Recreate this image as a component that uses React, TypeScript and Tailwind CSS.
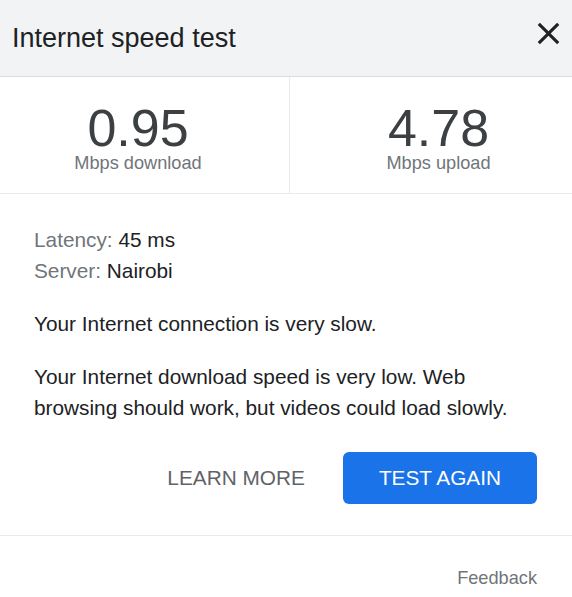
import React from "react";

export default function App() {
  return (
    <div className="w-[572px] h-[597px] bg-white overflow-hidden font-['Liberation_Sans',Arial,sans-serif]">
      {/* Header */}
      <div className="h-[77px] bg-[#f1f3f4] border-b border-[#dadce0] flex items-center justify-between pl-[12px] pr-[5px]">
        <div className="text-[27px] leading-[32px] text-[#202124]">Internet speed test</div>
        <button className="w-[37px] h-[37px] mb-[10px] text-[#202124] flex items-center justify-center" aria-label="Close">
          <svg viewBox="0 0 24 24" width="37" height="37" fill="currentColor">
            <path d="M19 6.41L17.59 5 12 10.59 6.41 5 5 6.41 10.59 12 5 17.59 6.41 19 12 13.41 17.59 19 19 17.59 13.41 12z" />
          </svg>
        </button>
      </div>

      {/* Stats */}
      <div className="h-[117px] border-b border-[#ebebeb] flex">
        <div className="w-[290px] border-r border-[#ebebeb] pr-[13px] pt-[25px] flex flex-col items-center">
          <div className="text-[52px] leading-[52px] text-[#3c4043]">0.95</div>
          <div className="text-[18.2px] leading-[18px] text-[#70757a]">Mbps download</div>
        </div>
        <div className="flex-1 pl-[15px] pt-[25px] flex flex-col items-center">
          <div className="text-[52px] leading-[52px] text-[#3c4043]">4.78</div>
          <div className="text-[18.2px] leading-[18px] text-[#70757a]">Mbps upload</div>
        </div>
      </div>

      {/* Body */}
      <div className="pt-[30px] pl-[34px] pr-[35px] pb-[31px] border-b border-[#ebebeb] text-[20.8px] leading-[31px] text-[#202124]">
        <div>
          <span className="text-[#70757a]">Latency: </span>45 ms
        </div>
        <div>
          <span className="text-[#70757a]">Server: </span>Nairobi
        </div>
        <p className="mt-[22px]">Your Internet connection is very slow.</p>
        <p className="mt-[22px]">
          Your Internet download speed is very low. Web browsing should work, but videos could load slowly.
        </p>
        <div className="mt-[29px] flex items-center justify-end gap-[38px]">
          <button className="text-[20.8px] leading-[24px] text-[#5f6368]">LEARN MORE</button>
          <button className="h-[52px] px-[36px] rounded-[6px] bg-[#1a73e8] text-white text-[20.8px] leading-[24px]">
            TEST AGAIN
          </button>
        </div>
      </div>

      {/* Footer */}
      <div className="pt-[30px] pr-[35px] flex justify-end">
        <span className="text-[18.2px] leading-[24px] text-[#70757a]">Feedback</span>
      </div>
    </div>
  );
}
